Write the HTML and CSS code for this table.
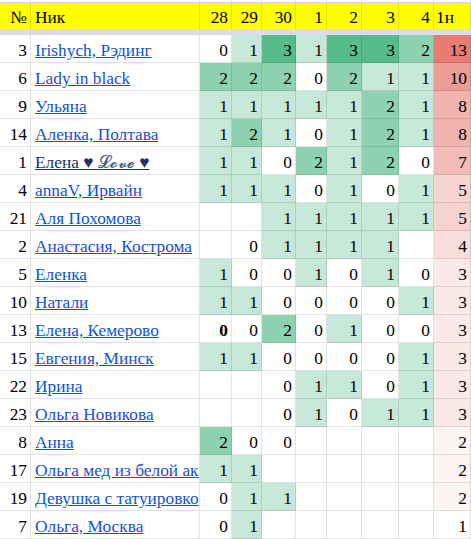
FILE: index.html
```html
<!DOCTYPE html>
<html lang="ru">
<head>
<meta charset="utf-8">
<title>Таблица</title>
<link rel="stylesheet" href="styles.css">
</head>
<body>
<div class="sheet">
  <div class="top"></div><div class="top"></div><div class="top"></div><div class="top"></div><div class="top"></div><div class="top"></div><div class="top"></div><div class="top"></div><div class="top"></div><div class="top"></div>

  <div class="c hd">№</div><div class="c hd name">Ник</div><div class="c hd">28</div><div class="c hd">29</div><div class="c hd">30</div><div class="c hd">1</div><div class="c hd">2</div><div class="c hd">3</div><div class="c hd">4</div><div class="c hd left">1н</div>

  <div class="sep"></div>

  <div class="c">3</div><div class="c name"><a class="link" href="#">Irishych, Рэдинг</a></div><div class="c">0</div><div class="c g1">1</div><div class="c g3">3</div><div class="c g1">1</div><div class="c g3">3</div><div class="c g3">3</div><div class="c g2">2</div><div class="c r13">13</div>

  <div class="c">6</div><div class="c name"><a class="link" href="#">Lady in black</a></div><div class="c g2">2</div><div class="c g2">2</div><div class="c g2">2</div><div class="c">0</div><div class="c g2">2</div><div class="c g1">1</div><div class="c g1">1</div><div class="c r10">10</div>

  <div class="c">9</div><div class="c name"><a class="link" href="#">Ульяна</a></div><div class="c g1">1</div><div class="c g1">1</div><div class="c g1">1</div><div class="c g1">1</div><div class="c g1">1</div><div class="c g2">2</div><div class="c g1">1</div><div class="c r8">8</div>

  <div class="c">14</div><div class="c name"><a class="link" href="#">Аленка, Полтава</a></div><div class="c g1">1</div><div class="c g2">2</div><div class="c g1">1</div><div class="c">0</div><div class="c g1">1</div><div class="c g2">2</div><div class="c g1">1</div><div class="c r8">8</div>

  <div class="c">1</div><div class="c name"><a class="link dark" href="#">Елена ♥ <span class="love">𝓛𝓸𝓿𝓮</span> ♥</a></div><div class="c g1">1</div><div class="c g1">1</div><div class="c">0</div><div class="c g2">2</div><div class="c g1">1</div><div class="c g2">2</div><div class="c">0</div><div class="c r7">7</div>

  <div class="c">4</div><div class="c name"><a class="link" href="#">annaV, Ирвайн</a></div><div class="c g1">1</div><div class="c g1">1</div><div class="c g1">1</div><div class="c">0</div><div class="c g1">1</div><div class="c">0</div><div class="c g1">1</div><div class="c r5">5</div>

  <div class="c">21</div><div class="c name"><a class="link" href="#">Аля Похомова</a></div><div class="c"></div><div class="c"></div><div class="c g1">1</div><div class="c g1">1</div><div class="c g1">1</div><div class="c g1">1</div><div class="c g1">1</div><div class="c r5">5</div>

  <div class="c">2</div><div class="c name"><a class="link" href="#">Анастасия, Кострома</a></div><div class="c"></div><div class="c">0</div><div class="c g1">1</div><div class="c g1">1</div><div class="c g1">1</div><div class="c g1">1</div><div class="c"></div><div class="c r4">4</div>

  <div class="c">5</div><div class="c name"><a class="link" href="#">Еленка</a></div><div class="c g1">1</div><div class="c">0</div><div class="c">0</div><div class="c g1">1</div><div class="c">0</div><div class="c g1">1</div><div class="c">0</div><div class="c r3">3</div>

  <div class="c">10</div><div class="c name"><a class="link" href="#">Натали</a></div><div class="c g1">1</div><div class="c g1">1</div><div class="c">0</div><div class="c">0</div><div class="c">0</div><div class="c">0</div><div class="c g1">1</div><div class="c r3">3</div>

  <div class="c">13</div><div class="c name"><a class="link" href="#">Елена, Кемерово</a></div><div class="c bold">0</div><div class="c">0</div><div class="c g2">2</div><div class="c">0</div><div class="c g1">1</div><div class="c">0</div><div class="c">0</div><div class="c r3">3</div>

  <div class="c">15</div><div class="c name"><a class="link" href="#">Евгения, Минск</a></div><div class="c g1">1</div><div class="c g1">1</div><div class="c">0</div><div class="c">0</div><div class="c">0</div><div class="c">0</div><div class="c g1">1</div><div class="c r3">3</div>

  <div class="c">22</div><div class="c name"><a class="link" href="#">Ирина</a></div><div class="c"></div><div class="c"></div><div class="c">0</div><div class="c g1">1</div><div class="c g1">1</div><div class="c">0</div><div class="c g1">1</div><div class="c r3">3</div>

  <div class="c">23</div><div class="c name"><a class="link" href="#">Ольга Новикова</a></div><div class="c"></div><div class="c"></div><div class="c">0</div><div class="c g1">1</div><div class="c">0</div><div class="c g1">1</div><div class="c g1">1</div><div class="c r3">3</div>

  <div class="c">8</div><div class="c name"><a class="link" href="#">Анна</a></div><div class="c g2">2</div><div class="c">0</div><div class="c">0</div><div class="c"></div><div class="c"></div><div class="c"></div><div class="c"></div><div class="c r2">2</div>

  <div class="c">17</div><div class="c name"><a class="link" href="#">Ольга мед из белой акации</a></div><div class="c g1">1</div><div class="c g1">1</div><div class="c"></div><div class="c"></div><div class="c"></div><div class="c"></div><div class="c"></div><div class="c r2">2</div>

  <div class="c">19</div><div class="c name"><a class="link" href="#">Девушка с татуировкой</a></div><div class="c">0</div><div class="c g1">1</div><div class="c g1">1</div><div class="c"></div><div class="c"></div><div class="c"></div><div class="c"></div><div class="c r2">2</div>

  <div class="c">7</div><div class="c name"><a class="link" href="#">Ольга, Москва</a></div><div class="c">0</div><div class="c g1">1</div><div class="c"></div><div class="c"></div><div class="c"></div><div class="c"></div><div class="c"></div><div class="c">1</div>
</div>
</body>
</html>
```

FILE: styles.css
```css
html, body {
  margin: 0;
  padding: 0;
  background: #ffffff;
}

.sheet {
  display: grid;
  grid-template-columns: 31px 169px 32px 30px 34px 31px 35px 37px 35px 37px;
  width: 471px;
  font-family: "Liberation Serif", "Times New Roman", serif;
  font-size: 17.33px;
  color: #000000;
}

.top {
  height: 3px;
  box-sizing: border-box;
  border-right: 1px solid #e2e2e2;
  border-bottom: 1px solid #d4d4d4;
}

.c {
  box-sizing: border-box;
  height: 28px;
  padding: 4px 3px 0 3px;
  line-height: 23px;
  text-align: right;
  white-space: nowrap;
  overflow: hidden;
  border-right: 1px solid rgba(0, 0, 0, 0.11);
  border-bottom: 1px solid rgba(0, 0, 0, 0.11);
  background: #ffffff;
}

.hd {
  height: 27px;
  padding-top: 3px;
  background: #ffff00;
  border-bottom: none;
}

.name {
  text-align: left;
  padding-left: 4px;
  padding-right: 0;
  text-overflow: clip;
}

.left {
  text-align: left;
  padding-left: 2px;
}

.sep {
  grid-column: 1 / -1;
  height: 5px;
  background: #dadde2;
}

.link {
  color: #1155cc;
  text-decoration: underline;
}

.link.dark {
  color: #1f3263;
}

.love {
  color: #4d5878;
  font-weight: normal;
}

.bold {
  font-weight: bold;
}

.g1 { background: #c7e8d8; }
.g2 { background: #8fd2b1; }
.g3 { background: #57bb8a; }

.r13 { background: #e67c73; }
.r10 { background: #ec9d96; }
.r8  { background: #f0b3ad; }
.r7  { background: #f2bdb9; }
.r5  { background: #f7d3d0; }
.r4  { background: #f9dedc; }
.r3  { background: #fbe9e8; }
.r2  { background: #fdf4f3; }
```
